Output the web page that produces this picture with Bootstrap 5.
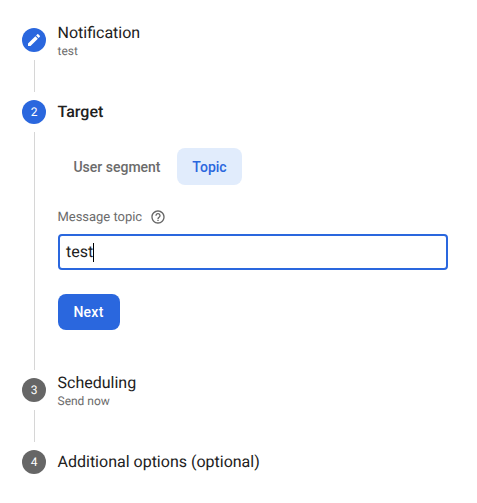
<!DOCTYPE html>
<html lang="en">
<head>
<meta charset="utf-8">
<meta name="viewport" content="width=device-width, initial-scale=1">
<title>Compose notification</title>
<link href="https://cdn.jsdelivr.net/npm/bootstrap@5.3.0/dist/css/bootstrap.min.css" rel="stylesheet">
<style>
  body { font-family: Roboto, "Liberation Sans", sans-serif; color: #212121; background: #fff; text-rendering: geometricPrecision; }
  .stepper { padding: 28px 29px 0 22px; }
  .step { min-height: 72px; }
  .step-rail { width: 24px; margin-right: 12px; }
  .step-dot { width: 24px; height: 24px; flex: none; font-size: 12px; line-height: 24px; color: #fff; background: #666; }
  .step-dot.is-active { background: #2a67de; }
  .step-line { width: 1px; margin: 8px 0; background: #d6d6d6; }
  .step-head { height: 24px; margin-left: -.5px; }
  .step-head.has-note { height: 26px; }
  .step-title { font-size: 16px; line-height: 20px; }
  .step-title.is-current { font-weight: 500; }
  .step-note { font-size: 12px; line-height: 16px; color: #6b6b6b; }
  .target-body { padding-top: 24px; height: 254px; }
  .tab-btn { height: 37px; padding: 2px 1px 0 0; width: 119px; border: 0; border-radius: 8px; font-size: 14px; font-weight: 500; color: #6b6b6b; }
  .tab-btn.is-selected { width: 65px; padding-right: 0; }
  .tab-btn.is-selected, .tab-btn.is-selected:hover { background: #e1ecfc; color: #2a67de; }
  .topic-label { margin-top: 23px; height: 18px; font-size: 13px; line-height: 18px; color: #6b6b6b; }
  .topic-label span { width: 84.500px; margin: 1px 0 0 -.5px; white-space: nowrap; letter-spacing: -.03px; line-height: 19px; }
  .topic-field { margin-top: 8px; height: 36px; padding: 0 6px; border: 2px solid #2a67de; border-radius: 4px; font-size: 16px; color: #212121; }
  .caret { width: 1px; height: 19px; background: #000; }
  .next-btn { margin-top: 24px; width: 62px; height: 36px; padding: 1px 1px 0 0; border: 0; border-radius: 8px; background: #2a67de; color: #fff; font-size: 14px; font-weight: 500; letter-spacing: .25px; }
</style>
</head>
<body>
<main class="stepper d-flex flex-column">
  <section class="step d-flex">
    <div class="step-rail d-flex flex-column align-items-center">
      <span class="step-dot is-active rounded-circle d-flex align-items-center justify-content-center">
        <svg width="16" height="16" viewBox="0 0 24 24" fill="#fff" aria-hidden="true"><path d="M3 17.25V21h3.75L17.81 9.94l-3.75-3.75L3 17.25zM20.71 7.04a1 1 0 0 0 0-1.41l-2.34-2.34a1 1 0 0 0-1.41 0l-1.83 1.83 3.75 3.75 1.83-1.83z"/></svg>
      </span>
      <span class="step-line flex-grow-1"></span>
    </div>
    <div class="step-head has-note d-flex flex-column justify-content-center">
      <div class="step-title">Notification</div>
      <div class="step-note">test</div>
    </div>
  </section>

  <section class="step d-flex">
    <div class="step-rail d-flex flex-column align-items-center">
      <span class="step-dot is-active rounded-circle text-center">2</span>
      <span class="step-line flex-grow-1"></span>
    </div>
    <div class="flex-grow-1">
      <div class="step-head d-flex align-items-center">
        <div class="step-title is-current">Target</div>
      </div>
      <div class="target-body">
        <div class="d-flex">
          <button type="button" class="btn tab-btn">User segment</button>
          <button type="button" class="btn tab-btn is-selected">Topic</button>
        </div>
        <div class="topic-label d-flex align-items-center gap-2">
          <span>Message topic</span>
          <svg width="16" height="16" viewBox="0 0 24 24" fill="#666" aria-hidden="true"><path d="M11 18h2v-2h-2v2zm1-16C6.48 2 2 6.48 2 12s4.48 10 10 10 10-4.48 10-10S17.52 2 12 2zm0 18c-4.41 0-8-3.59-8-8s3.59-8 8-8 8 3.59 8 8-3.59 8-8 8zm0-14c-2.21 0-4 1.79-4 4h2c0-1.1.9-2 2-2s2 .9 2 2c0 2-3 1.750-3 5h2c0-2.250 3-2.500 3-5 0-2.210-1.790-4-4-4z"/></svg>
        </div>
        <div class="topic-field form-control d-flex align-items-center" role="textbox"><span>test</span><span class="caret"></span></div>
        <button type="button" class="btn next-btn">Next</button>
      </div>
    </div>
  </section>

  <section class="step d-flex">
    <div class="step-rail d-flex flex-column align-items-center">
      <span class="step-dot rounded-circle text-center">3</span>
      <span class="step-line flex-grow-1"></span>
    </div>
    <div class="step-head has-note d-flex flex-column justify-content-center">
      <div class="step-title">Scheduling</div>
      <div class="step-note">Send now</div>
    </div>
  </section>

  <section class="d-flex">
    <div class="step-rail"><span class="step-dot rounded-circle text-center d-block">4</span></div>
    <div class="step-head d-flex align-items-center">
      <div class="step-title">Additional options (optional)</div>
    </div>
  </section>
</main>
<script src="https://cdn.jsdelivr.net/npm/bootstrap@5.3.0/dist/js/bootstrap.bundle.min.js"></script>
</body>
</html>
